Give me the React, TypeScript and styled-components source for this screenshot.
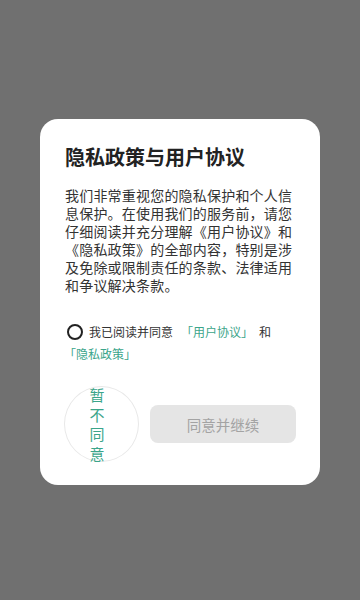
import React from "react";
import styled, { createGlobalStyle } from "styled-components";

const GlobalStyle = createGlobalStyle`
  html, body {
    margin: 0;
    padding: 0;
    background: #707070;
    font-family: "Noto Sans CJK SC", "Noto Sans", sans-serif;
  }
  #root {
    min-height: 600px;
  }
`;

const Overlay = styled.div`
  width: 360px;
  height: 600px;
  background: #707070;
  padding-top: 119px;
  box-sizing: border-box;
  display: flex;
  justify-content: center;
  align-items: flex-start;
`;

const Card = styled.div`
  width: 280px;
  box-sizing: border-box;
  background: #ffffff;
  border-radius: 18px;
  padding: 24px 24px 23px 24px;
  display: flex;
  flex-direction: column;
`;

const Title = styled.h1`
  margin: 0 0 15px 1px;
  font-size: 20px;
  line-height: 28px;
  font-weight: 700;
  color: #222222;
`;

const Body = styled.p`
  margin: 0 0 27px 1px;
  font-size: 14px;
  line-height: 18px;
  letter-spacing: 0.2px;
  color: #333333;
`;

const Consent = styled.p`
  margin: 0 0 21px 0;
  font-size: 12px;
  line-height: 22px;
  color: #333333;
`;

const Check = styled.span`
  display: inline-block;
  width: 16px;
  height: 16px;
  box-sizing: border-box;
  border: 2px solid #222222;
  border-radius: 50%;
  vertical-align: -3px;
  margin: 0 6px 0 3px;
`;

const Link = styled.span<{ $tight?: boolean }>`
  display: inline-block;
  white-space: nowrap;
  color: #3ba58a;
  margin: ${(p) => (p.$tight ? "0" : "0 6px 0 8px")};
`;

const Actions = styled.div`
  display: flex;
  align-items: center;
  gap: 11px;
`;

const Decline = styled.button`
  flex: 0 0 auto;
  width: 75px;
  height: 76px;
  border: 1px solid #e8e8e8;
  border-radius: 50%;
  background: #ffffff;
  padding: 0 9px 0 0;
  display: flex;
  align-items: center;
  justify-content: center;
  font-family: inherit;
  cursor: pointer;
`;

const DeclineText = styled.span`
  display: block;
  width: 15px;
  font-size: 15px;
  line-height: 19.5px;
  color: #3ba58a;
  word-break: break-all;
`;

const Agree = styled.button`
  flex: 1;
  height: 38px;
  border: none;
  border-radius: 8px;
  background: #e5e5e5;
  color: #a3a3a3;
  font-family: inherit;
  font-size: 14.5px;
  cursor: pointer;
`;

export default function App() {
  return (
    <>
      <GlobalStyle />
      <Overlay>
        <Card>
          <Title>隐私政策与用户协议</Title>
          <Body>
            我们非常重视您的隐私保护和个人信息保护。在使用我们的服务前，请您仔细阅读并充分理解《用户协议》和《隐私政策》的全部内容，特别是涉及免除或限制责任的条款、法律适用和争议解决条款。
          </Body>
          <Consent>
            <Check />
            我已阅读并同意<Link>「用户协议」</Link>和 <Link $tight>「隐私政策」</Link>
          </Consent>
          <Actions>
            <Decline>
              <DeclineText>暂不同意</DeclineText>
            </Decline>
            <Agree disabled>同意并继续</Agree>
          </Actions>
        </Card>
      </Overlay>
    </>
  );
}
